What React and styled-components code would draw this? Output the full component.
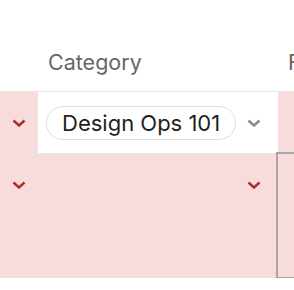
import styled, { createGlobalStyle } from "styled-components";

const GlobalStyle = createGlobalStyle`
  html, body {
    margin: 0;
    padding: 0;
    background: #ffffff;
    font-family: Inter, "Noto Sans", sans-serif;
    overflow: hidden;
  }
`;

const Chevron = ({ color }) => (
  <ChevronSvg width="14" height="8" viewBox="0 0 14 8">
    <polyline
      points="1.5,1.5 7,6.5 12.5,1.5"
      fill="none"
      stroke={color}
      strokeWidth="2.5"
      strokeLinecap="butt"
      strokeLinejoin="miter"
    />
  </ChevronSvg>
);

export default function App() {
  return (
    <>
      <GlobalStyle />
      <Table>
        <HeaderRow>
          <HeaderCell />
          <HeaderCell>Category</HeaderCell>
          <HeaderCell>Format</HeaderCell>
        </HeaderRow>
        <Row height={61}>
          <Cell pink center>
            <Chevron color="#a8312f" />
          </Cell>
          <CategoryCell>
            <Pill>Design Ops 101</Pill>
            <Chevron color="#8a8a8a" />
          </CategoryCell>
          <Cell pink />
        </Row>
        <Row height={123}>
          <Cell pink>
            <Chevron color="#a8312f" />
          </Cell>
          <CategoryCell pink end>
            <Chevron color="#a8312f" />
          </CategoryCell>
          <Cell pink focused />
        </Row>
      </Table>
    </>
  );
}

const Table = styled.div`
  display: flex;
  flex-direction: column;
  width: 294px;
`;

const HeaderRow = styled.div`
  display: grid;
  grid-template-columns: 38px 240px 1fr;
  height: 91px;
  border-bottom: 1px solid #e4e4e4;
`;

const HeaderCell = styled.div`
  display: flex;
  align-items: flex-end;
  padding: 0 0 17px 10px;
  font-size: 21.5px;
  line-height: 24px;
  color: #666666;
  white-space: nowrap;
  overflow: hidden;
`;

const Row = styled.div`
  display: grid;
  grid-template-columns: 38px 240px 1fr;
  height: ${({ height }) => height}px;
  border-bottom: 1px solid #e4e4e4;
`;

const Cell = styled.div`
  display: flex;
  justify-content: center;
  align-items: ${({ center }) => (center ? "center" : "flex-start")};
  padding-top: ${({ center }) => (center ? 0 : 27)}px;
  background: ${({ pink }) => (pink ? "#f8dcdc" : "#ffffff")};
  outline: ${({ focused }) => (focused ? "2px solid #aaa4a4" : "none")};
  position: relative;
`;

const CategoryCell = styled.div`
  display: flex;
  align-items: ${({ end }) => (end ? "flex-start" : "center")};
  justify-content: ${({ end }) => (end ? "flex-end" : "flex-start")};
  gap: 11px;
  padding: ${({ end }) => (end ? "27px 17px 0 0" : "0 0 0 8px")};
  background: ${({ pink }) => (pink ? "#f8dcdc" : "#ffffff")};
`;

const Pill = styled.span`
  display: inline-flex;
  align-items: center;
  box-sizing: border-box;
  height: 34px;
  padding: 0 15px;
  border: 1px solid #dedede;
  border-radius: 17px;
  font-size: 22px;
  color: #1f1f1f;
  white-space: nowrap;
`;

const ChevronSvg = styled.svg`
  display: block;
  flex-shrink: 0;
`;
